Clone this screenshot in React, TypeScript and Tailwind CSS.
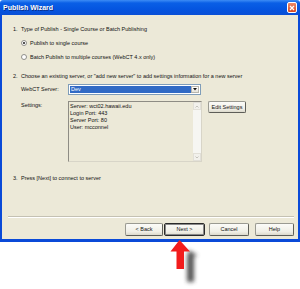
import React from "react";

function Btn({ label, w, def }: { label: string; w: string; def?: boolean }) {
  return (
    <div
      className={`${w} h-[13px] flex items-center justify-center rounded-[2px] bg-[linear-gradient(#fbfbf8,#f0efe6_70%,#dcd9cc)] ${
        def
          ? "border border-[#2a2a2a] shadow-[inset_0_0_0_1px_#8a8a8a]"
          : "border border-[#9a9a92] border-b-[#5e5e58] border-r-[#5e5e58]"
      }`}
    >
      <span>{label}</span>
    </div>
  );
}

function Radio({ checked }: { checked?: boolean }) {
  return (
    <div className="w-[6px] h-[6px] rounded-full border border-[#8f8f8a] bg-white flex items-center justify-center">
      {checked && <div className="w-[2px] h-[2px] rounded-full bg-[#1a1a1a]" />}
    </div>
  );
}

export default function App() {
  return (
    <div className="relative w-[300px] h-[289px] bg-white font-['Liberation_Sans',Arial,sans-serif] text-[5.5px] leading-[7px] text-[#111]">
      <div className="w-[300px] h-[242px] flex flex-col">
        {/* Title bar */}
        <div className="h-[15px] flex items-center justify-between pl-[3px] pr-[3px] rounded-t-[3px] bg-[linear-gradient(#3d8cf5,#0a5fe6_20%,#0555e0_60%,#0a4fd6)]">
          <span className="text-white font-bold text-[7px] leading-[9px] [text-shadow:1px_1px_0_#0a2e8a]">
            Publish Wizard
          </span>
          <div className="w-[10px] h-[11px] rounded-[2px] border border-white bg-[linear-gradient(#ec8a6a,#d9481f)] flex items-center justify-center">
            <svg width="6" height="6" viewBox="0 0 6 6">
              <path d="M1 1 L5 5 M5 1 L1 5" stroke="white" strokeWidth="1.3" />
            </svg>
          </div>
        </div>
        {/* Body */}
        <div className="flex-1 bg-[#ece9d8] border-l-2 border-r-2 border-b-[3px] border-[#0a4ad8] flex flex-col pl-[11px] pr-[4px]">
          <div className="h-[7px]" />
          <div className="h-[14px] flex items-center">
            <span className="w-[6px]">1.</span>
            <span className="ml-[2px]">Type of Publish - Single Course or Batch Publishing</span>
          </div>
          <div className="h-[14px] flex items-center pl-[8px] gap-[3px]">
            <Radio checked />
            <span>Publish to single course</span>
          </div>
          <div className="h-[14px] flex items-center pl-[8px] gap-[3px]">
            <Radio />
            <span>Batch Publish to multiple courses (WebCT 4.x only)</span>
          </div>
          <div className="h-[5px]" />
          <div className="h-[14px] flex items-center">
            <span className="w-[6px]">2.</span>
            <span className="ml-[2px]">
              Choose an existing server, or "add new server" to add settings information for a new server
            </span>
          </div>
          <div className="h-[1px]" />
          <div className="h-[11px] flex items-center pl-[8px]">
            <span className="w-[47px]">WebCT Server:</span>
            <div className="w-[133px] h-[11px] border border-[#7f9db9] bg-white flex p-[1px]">
              <div className="flex-1 bg-[#316ac5] text-white flex items-center pl-[1px]">Dev</div>
              <div className="w-[8px] bg-[linear-gradient(#ffffff,#e6e4dc)] border border-[#b8b6ad] flex items-center justify-center">
                <svg width="4" height="3" viewBox="0 0 4 3">
                  <path d="M0 0 H4 L2 2.5 Z" fill="#111" />
                </svg>
              </div>
            </div>
          </div>
          <div className="h-[6px]" />
          <div className="h-[61px] flex pl-[8px]">
            <span className="w-[47px] pt-[1px]">Settings:</span>
            <div className="w-[134px] h-[61px] border border-[#8e8c84] border-b-[#d8d5c8] border-r-[#d8d5c8] bg-[#ece9d8] flex">
              <div className="flex-1 pl-[1px] pt-[1px] leading-[7px]">
                <div>Server: wct02.hawaii.edu</div>
                <div>Login Port: 443</div>
                <div>Server Port: 80</div>
                <div>User: mcconnel</div>
              </div>
              <div className="w-[8px] bg-[#f6f6f2] flex flex-col justify-between">
                <div className="h-[8px] flex items-center justify-center bg-[#f2f1ec] border border-[#e2e0d8]">
                  <svg width="4" height="3" viewBox="0 0 4 3">
                    <path d="M0.5 2.5 L2 1 L3.5 2.5" stroke="#b8b8b0" fill="none" strokeWidth="0.8" />
                  </svg>
                </div>
                <div className="h-[8px] flex items-center justify-center bg-[#f2f1ec] border border-[#e2e0d8]">
                  <svg width="4" height="3" viewBox="0 0 4 3">
                    <path d="M0.5 0.5 L2 2 L3.5 0.5" stroke="#b8b8b0" fill="none" strokeWidth="0.8" />
                  </svg>
                </div>
              </div>
            </div>
            <div className="ml-[6px] w-[38px] h-[12px] flex items-center justify-center rounded-[2px] bg-[linear-gradient(#fbfbf8,#f0efe6_70%,#dcd9cc)] border border-[#9a9a92] border-b-[#5e5e58] border-r-[#5e5e58]">
              Edit Settings
            </div>
          </div>
          <div className="h-[9px]" />
          <div className="h-[14px] flex items-center">
            <span className="w-[6px]">3.</span>
            <span className="ml-[2px]">Press [Next] to connect to server</span>
          </div>
          <div className="h-[31px]" />
          <div className="ml-[-5px] mr-[0px] h-[2px] border-t border-[#c4c1b3] border-b border-b-white" />
          <div className="h-[5px]" />
          <div className="h-[13px] flex pl-[112px]">
            <Btn label="< Back" w="w-[38px]" />
            <div className="w-[1px]" />
            <Btn label="Next >" w="w-[41px]" def />
            <div className="w-[4px]" />
            <Btn label="Cancel" w="w-[40px]" />
            <div className="w-[6px]" />
            <Btn label="Help" w="w-[39px]" />
          </div>
        </div>
      </div>
      {/* Pointer arrow overlay */}
      <svg className="absolute left-[160px] top-[236px]" width="50" height="53" viewBox="0 0 50 53">
        <defs>
          <filter id="blur" x="-50%" y="-50%" width="200%" height="200%">
            <feGaussianBlur stdDeviation="2.2" />
          </filter>
        </defs>
        <path
          d="M29 14 L38 20 L34 20 L34 46 L27 46 L27 20 Z"
          fill="#3a3a3a"
          opacity="0.85"
          filter="url(#blur)"
        />
        <path d="M19.5 4 L30 15.5 L24 15.5 L24 33 L16.5 33 L16.5 15.5 L10.5 15.5 Z" fill="#f21c1c" />
      </svg>
    </div>
  );
}
